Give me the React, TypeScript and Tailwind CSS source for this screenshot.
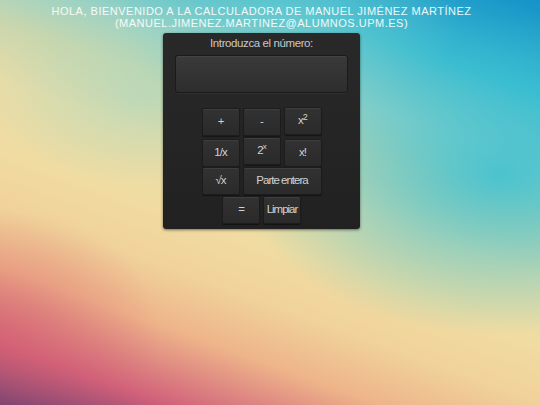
import React from "react";

function Key({
  children,
  wide = false,
  shift = "",
}: {
  children: React.ReactNode;
  wide?: boolean;
  shift?: string;
}) {
  return (
    <button
      className={
        (wide ? "w-[79px] " : "w-[38px] ") +
        shift +
        " h-[28px] flex items-center justify-center rounded-[2px] border border-[#1c1c1c] bg-gradient-to-b from-[#323232] to-[#2a2a2a] text-[11.5px] leading-none tracking-[-1px] text-[#d2d2d2] shadow-[0_1px_1px_rgba(0,0,0,0.45),inset_0_1px_0_rgba(255,255,255,0.06)]"
      }
    >
      {children}
    </button>
  );
}

export default function App() {
  return (
    <div className="h-[405px] w-full overflow-hidden font-['Liberation_Sans',Arial,sans-serif] bg-[radial-gradient(ellipse_260px_160px_at_500px_175px,rgba(58,192,210,0.85),transparent),radial-gradient(ellipse_170px_110px_at_290px_20px,rgba(120,206,206,0.6),transparent),radial-gradient(ellipse_150px_90px_at_140px_95px,rgba(168,216,192,0.55),transparent),radial-gradient(ellipse_160px_120px_at_0px_330px,rgba(214,96,112,0.5),transparent),linear-gradient(200deg,#1592c8_0%,#3cbcd0_16%,#9cd2c4_28%,#c8d6ae_36%,#e8dca8_46%,#f0dca2_57%,#f0d29a_67%,#eeb48a_77%,#d0607a_90%,#6a3e72_100%)]">
      <div className="w-[523px] flex flex-col items-center pt-[5px]">
        <h1 className="text-[11px] leading-[12px] tracking-[0.5px] text-white/90 text-center uppercase font-normal">
          HOLA, BIENVENIDO A LA CALCULADORA DE MANUEL JIMÉNEZ MARTÍNEZ
          <br />
          (MANUEL.JIMENEZ.MARTINEZ@ALUMNOS.UPM.ES)
        </h1>
        <div className="mt-[4px] w-[197px] pt-[4px] pb-[5px] rounded-[3px] bg-gradient-to-b from-[#292929] to-[#212121] shadow-[0_1px_3px_rgba(0,0,0,0.5)] flex flex-col items-center">
          <label className="text-[11.5px] leading-[13px] tracking-[-0.4px] text-[#c8c8c8]">
            Introduzca el número:
          </label>
          <div className="mt-[5px] w-[173px] h-[38px] rounded-[3px] border border-[#1a1a1a] bg-gradient-to-b from-[#3a3a3a] to-[#2d2d2d] shadow-[inset_0_1px_0_rgba(255,255,255,0.05),0_1px_0_rgba(255,255,255,0.04)]" />
          <div className="mt-[15px] flex flex-col items-center">
            <div className="flex items-start gap-[3px]">
              <Key>+</Key>
              <Key>-</Key>
              <Key shift="-mt-[1px]">
                x<sup className="text-[9px]">2</sup>
              </Key>
            </div>
            <div className="mt-[3px] flex items-start gap-[3px]">
              <Key>1/x</Key>
              <Key shift="-mt-[2px]">
                2<sup className="text-[8px]">x</sup>
              </Key>
              <Key>x!</Key>
            </div>
            <div className="flex items-start gap-[3px]">
              <Key>√x</Key>
              <Key wide>Parte entera</Key>
            </div>
            <div className="mt-[1px] flex items-start gap-[3px]">
              <Key>=</Key>
              <Key>Limpiar</Key>
            </div>
          </div>
        </div>
      </div>
    </div>
  );
}
